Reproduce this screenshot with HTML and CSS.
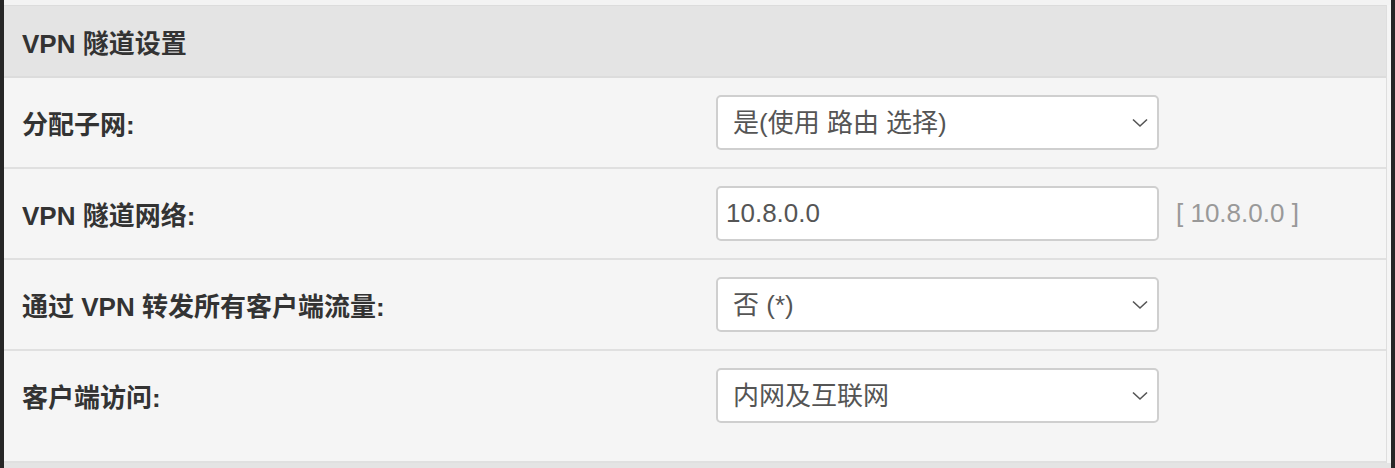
FILE: index.html
```html
<!DOCTYPE html>
<html lang="zh-CN">
<head>
  <meta charset="UTF-8" />
  <meta name="viewport" content="width=device-width, initial-scale=1.0"/>
  <title>VPN 隧道设置</title>
  <link rel="stylesheet" href="styles.css">
</head>
<body>
  <div id="main">
    <div class="prev-panel"></div>

    <div class="panel">
      <div class="panel-heading">VPN 隧道设置</div>

      <div class="form-row">
        <label class="form-label" for="subnet">分配子网:</label>
        <div class="select-wrap">
          <select id="subnet" class="form-control">
            <option>是(使用 路由 选择)</option>
          </select>
          <svg class="chevron" width="16" height="10" viewBox="0 0 16 10"><path d="M1 1.5 L8 8 L15 1.5" fill="none" stroke="#555" stroke-width="1.6"/></svg>
        </div>
      </div>

      <div class="form-row">
        <label class="form-label" for="network">VPN 隧道网络:</label>
        <input id="network" class="form-control text-input" type="text" value="10.8.0.0">
        <span class="hint">[ 10.8.0.0 ]</span>
      </div>

      <div class="form-row">
        <label class="form-label" for="redirect">通过 VPN 转发所有客户端流量:</label>
        <div class="select-wrap">
          <select id="redirect" class="form-control">
            <option>否 (*)</option>
          </select>
          <svg class="chevron" width="16" height="10" viewBox="0 0 16 10"><path d="M1 1.5 L8 8 L15 1.5" fill="none" stroke="#555" stroke-width="1.6"/></svg>
        </div>
      </div>

      <div class="form-row last">
        <label class="form-label" for="access">客户端访问:</label>
        <div class="select-wrap">
          <select id="access" class="form-control">
            <option>内网及互联网</option>
          </select>
          <svg class="chevron" width="16" height="10" viewBox="0 0 16 10"><path d="M1 1.5 L8 8 L15 1.5" fill="none" stroke="#555" stroke-width="1.6"/></svg>
        </div>
      </div>
    </div>

    <div class="next-panel"></div>
  </div>
</body>
</html>
```

FILE: styles.css
```css
body {
  margin: 0;
  background-color: #262626;
  font-family: "Liberation Sans", "Noto Sans CJK SC", sans-serif;
  color: #333;
}

#main {
  margin: 0 4px;
  background-color: #f5f5f5;
  height: 468px;
  overflow: hidden;
}

.prev-panel {
  height: 5px;
  background-color: #f3f3f3;
}

.panel {
  border-top: 1px solid #dcdcdc;
  border-right: 1px solid #dedede;
  margin-right: 4px;
}

.panel-heading {
  height: 70px;
  display: flex;
  align-items: center;
  padding-left: 18px;
  background-color: #e4e4e4;
  border-bottom: 2px solid #dcdcdc;
  font-size: 26px;
  font-weight: bold;
}

.form-row {
  display: grid;
  grid-template-columns: 677px 443px auto;
  align-items: center;
  column-gap: 17px;
  padding: 17px 0 17px 18px;
  border-bottom: 2px solid #e0e0e0;
}

.form-row.last {
  padding-bottom: 38px;
}

.form-label {
  font-size: 26px;
  font-weight: bold;
  color: #333;
}

.select-wrap {
  position: relative;
}

.form-control {
  box-sizing: border-box;
  width: 443px;
  height: 55px;
  border: 2px solid #cfcfcf;
  border-radius: 5px;
  background-color: #fff;
  font-family: "Liberation Sans", "Noto Sans CJK SC", sans-serif;
  font-size: 26px;
  color: #555;
  outline: none;
}

select.form-control {
  appearance: none;
  -webkit-appearance: none;
  padding: 0 40px 0 15px;
}

.text-input {
  padding: 0 8px;
}

.chevron {
  position: absolute;
  right: 11px;
  top: 23px;
  pointer-events: none;
}

.hint {
  font-size: 26px;
  color: #999;
}

.next-panel {
  height: 10px;
  background-color: #e4e4e4;
}
```
